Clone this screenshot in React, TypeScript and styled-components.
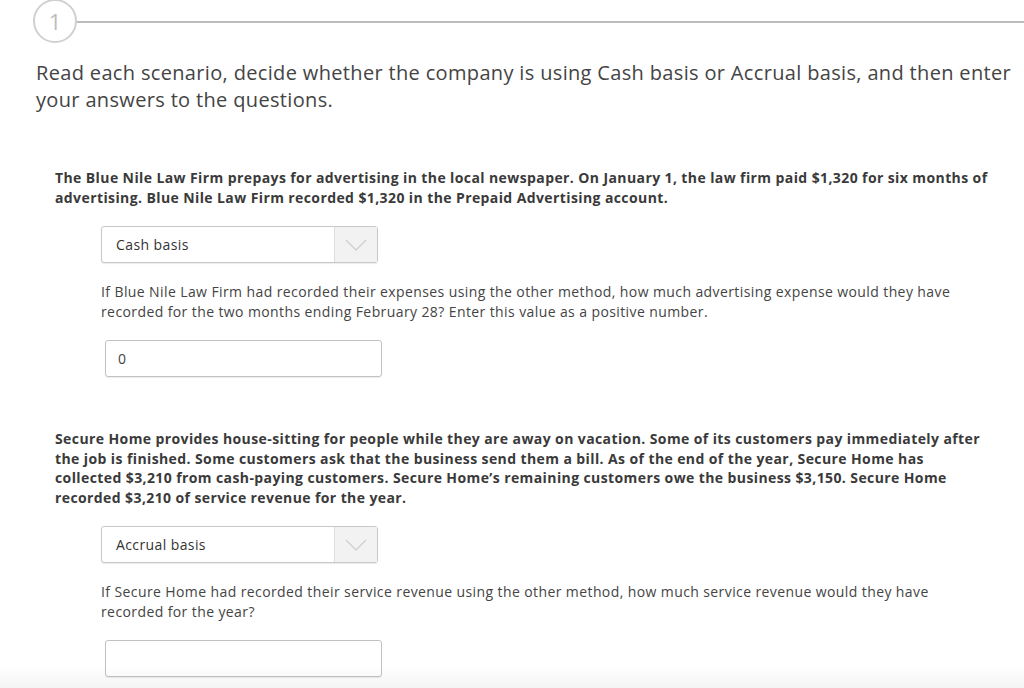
import React from "react";
import styled, { createGlobalStyle } from "styled-components";

const Global = createGlobalStyle`
  html, body { margin: 0; padding: 0; background: #fff; }
  body { font-family: "Open Sans", "Liberation Sans", sans-serif; color: #444; }
  * { box-sizing: border-box; }
`;

const Page = styled.div`
  width: 1024px;
  height: 688px;
  overflow: hidden;
  position: relative;
`;

const Header = styled.div`
  display: flex;
  align-items: center;
  padding-left: 33px;
  height: 43px;
`;

const StepCircle = styled.div`
  width: 44px;
  height: 44px;
  border-radius: 50%;
  border: 2px solid #d0d0d0;
  display: flex;
  align-items: center;
  justify-content: center;
  color: #bdbdbd;
  font-size: 22px;
  flex: none;
  margin-top: -1px;
`;

const Rule = styled.div`
  flex: 1;
  height: 2px;
  background: #bcbcbc;
`;

const Instructions = styled.p`
  margin: 16px 0 0 36px;
  font-size: 20px;
  line-height: 27px;
  letter-spacing: 0.34px;
  color: #444;
  width: 985px;
`;

const Scenario = styled.section<{ $top: number }>`
  margin: ${(p) => p.$top}px 0 0 55px;
  width: 935px;
`;

const ScenarioText = styled.p`
  margin: 0;
  font-size: 14px;
  font-weight: 700;
  line-height: 19.5px;
  letter-spacing: 0.4px;
  color: #3a3a3a;
`;

const Indent = styled.div`
  margin-left: 46px;
`;

const Select = styled.div`
  margin-top: 19px;
  width: 277px;
  height: 37px;
  border: 1px solid #c8c8c8;
  border-radius: 3px;
  display: flex;
  background: #fff;
  box-shadow: 0 1px 1px rgba(0, 0, 0, 0.08);
`;

const SelectValue = styled.div`
  flex: 1;
  display: flex;
  align-items: center;
  padding-left: 14px;
  font-size: 14px;
  letter-spacing: 0.4px;
  color: #333;
`;

const SelectArrow = styled.div`
  width: 43px;
  background: #f2f2f2;
  border-left: 1px solid #dedede;
  display: flex;
  align-items: center;
  justify-content: center;
`;

const Question = styled.p`
  margin: 19px 0 0 0;
  font-size: 14px;
  line-height: 20px;
  letter-spacing: 0.4px;
  color: #444;
  width: 870px;
`;

const Input = styled.div`
  margin: 18px 0 0 4px;
  width: 277px;
  height: 37px;
  border: 1px solid #c2c2c2;
  border-radius: 3px;
  display: flex;
  align-items: center;
  padding-left: 12px;
  font-size: 14px;
  color: #444;
  box-shadow: 0 1px 1px rgba(0, 0, 0, 0.08);
`;

const BottomFade = styled.div`
  position: absolute;
  left: 0;
  right: 0;
  bottom: 0;
  height: 22px;
  background: linear-gradient(to bottom, rgba(0, 0, 0, 0), rgba(0, 0, 0, 0.045));
  pointer-events: none;
`;

const Chevron = () => (
  <svg width="22" height="12" viewBox="0 0 22 12">
    <path d="M1 1 L11 11 L21 1" fill="none" stroke="#cfcfcf" strokeWidth="1.3" />
  </svg>
);

export default function App() {
  return (
    <Page>
      <Global />
      <Header>
        <StepCircle>1</StepCircle>
        <Rule />
      </Header>
      <Instructions>
        Read each scenario, decide whether the company is using Cash basis or Accrual basis, and then enter your answers to the questions.
      </Instructions>

      <Scenario $top={55}>
        <ScenarioText>
          The Blue Nile Law Firm prepays for advertising in the local newspaper. On January 1, the law firm paid $1,320 for six months of advertising. Blue Nile Law Firm recorded $1,320 in the Prepaid Advertising account.
        </ScenarioText>
        <Indent>
          <Select>
            <SelectValue>Cash basis</SelectValue>
            <SelectArrow>
              <Chevron />
            </SelectArrow>
          </Select>
          <Question>
            If Blue Nile Law Firm had recorded their expenses using the other method, how much advertising expense would they have recorded for the two months ending February 28? Enter this value as a positive number.
          </Question>
          <Input>0</Input>
        </Indent>
      </Scenario>

      <Scenario $top={52}>
        <ScenarioText>
          Secure Home provides house-sitting for people while they are away on vacation. Some of its customers pay immediately after the job is finished. Some customers ask that the business send them a bill. As of the end of the year, Secure Home has collected $3,210 from cash-paying customers. Secure Home’s remaining customers owe the business $3,150. Secure Home recorded $3,210 of service revenue for the year.
        </ScenarioText>
        <Indent>
          <Select>
            <SelectValue>Accrual basis</SelectValue>
            <SelectArrow>
              <Chevron />
            </SelectArrow>
          </Select>
          <Question>
            If Secure Home had recorded their service revenue using the other method, how much service revenue would they have recorded for the year?
          </Question>
          <Input />
        </Indent>
      </Scenario>
      <BottomFade />
    </Page>
  );
}
